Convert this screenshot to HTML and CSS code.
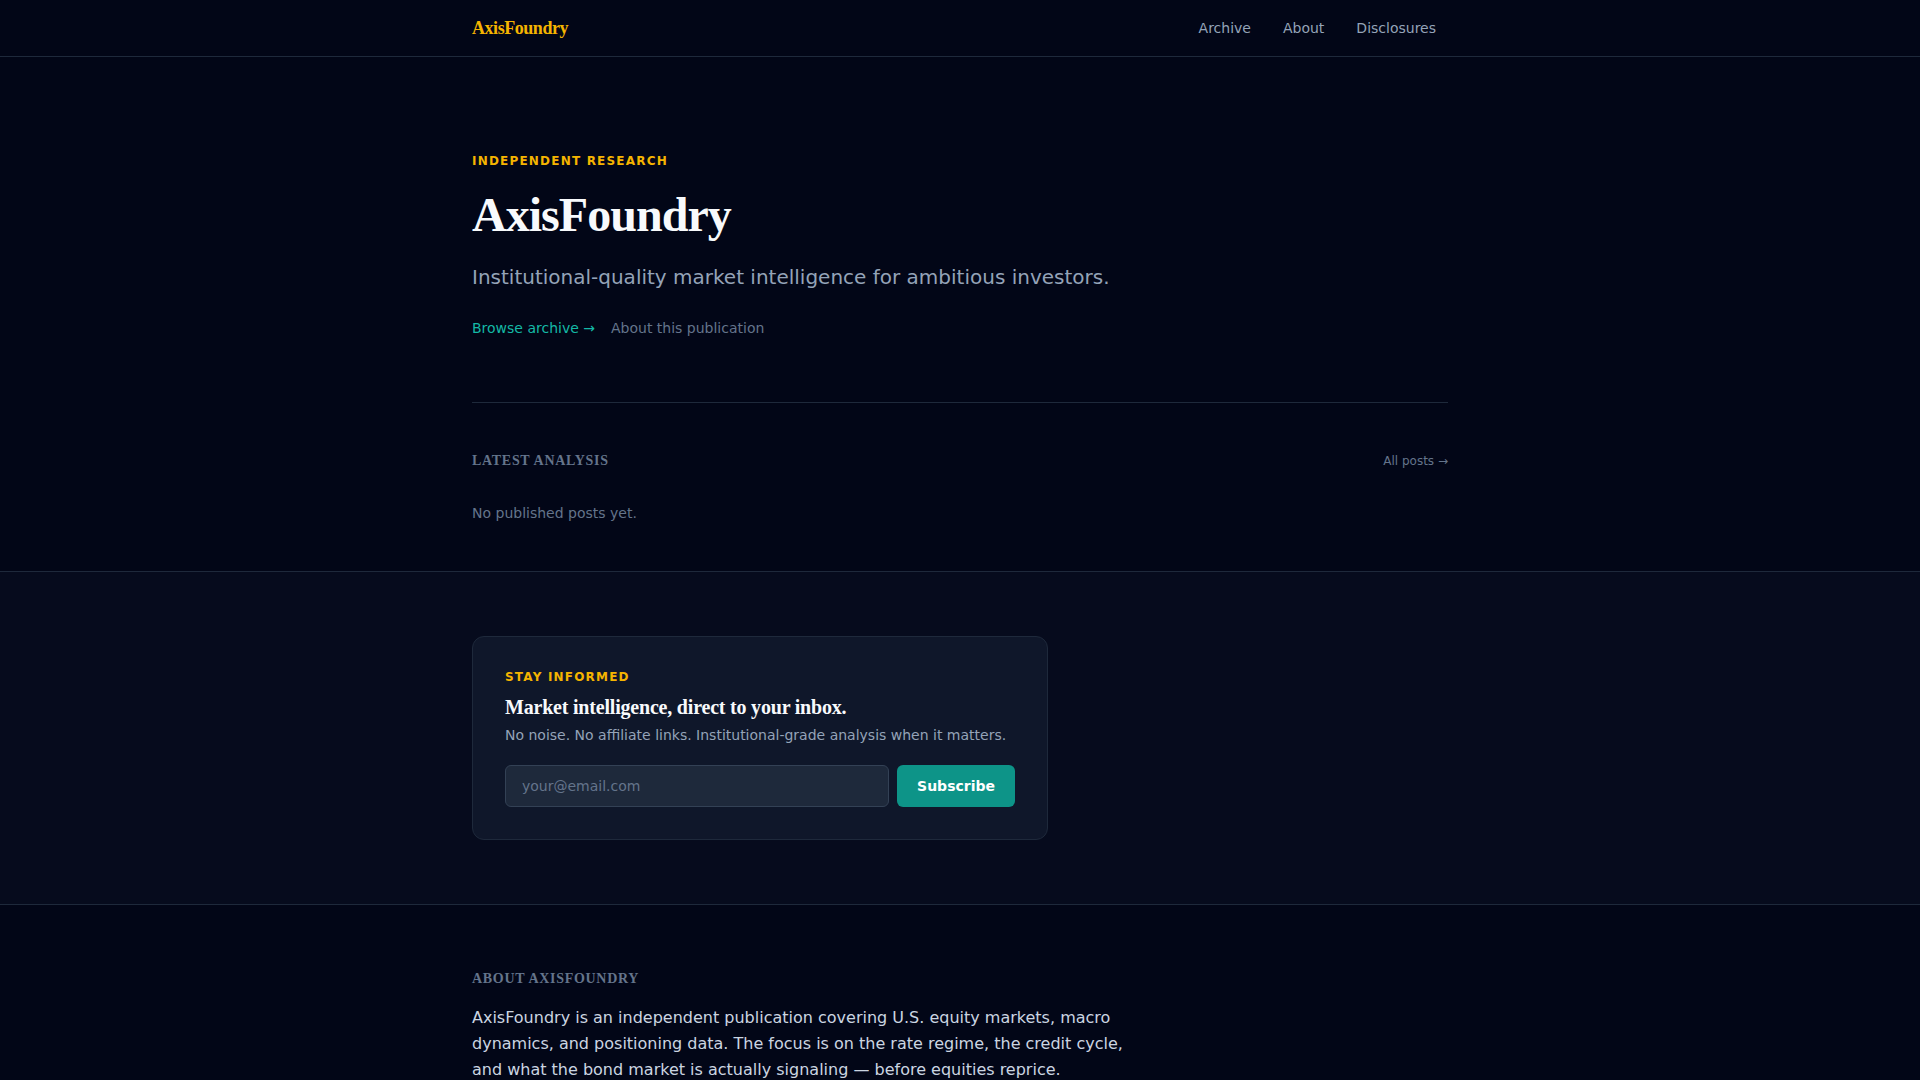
FILE: index.html
```html
<!DOCTYPE html>
<html lang="en">
<head>
  <meta charset="UTF-8" />
  <meta name="viewport" content="width=device-width, initial-scale=1.0"/>
  <title>AxisFoundry</title>
  <link rel="stylesheet" href="styles.css">
</head>
<body>
  <header class="site-header">
    <div class="container header-inner">
      <a class="logo" href="#">AxisFoundry</a>
      <nav class="nav">
        <a href="#">Archive</a>
        <a href="#">About</a>
        <a href="#">Disclosures</a>
      </nav>
    </div>
  </header>

  <main>
    <div class="container">
      <section class="hero">
        <p class="eyebrow">Independent Research</p>
        <h1 class="hero-title">AxisFoundry</h1>
        <p class="hero-sub">Institutional-quality market intelligence for ambitious investors.</p>
        <div class="hero-links">
          <a class="link-accent" href="#">Browse archive →</a>
          <a class="link-muted" href="#">About this publication</a>
        </div>
      </section>

      <section class="latest">
        <div class="section-head">
          <h2 class="section-label">Latest Analysis</h2>
          <a class="small-link" href="#">All posts →</a>
        </div>
        <p class="empty">No published posts yet.</p>
      </section>
    </div>

    <section class="newsletter">
      <div class="container">
        <div class="signup-card">
          <p class="eyebrow">Stay Informed</p>
          <h3 class="signup-title">Market intelligence, direct to your inbox.</h3>
          <p class="signup-text">No noise. No affiliate links. Institutional-grade analysis when it matters.</p>
          <form class="signup-form" onsubmit="return false;">
            <input class="signup-input" type="email" placeholder="your@email.com">
            <button class="signup-button" type="submit">Subscribe</button>
          </form>
        </div>
      </div>
    </section>

    <section class="about">
      <div class="container">
        <h2 class="section-label">About AxisFoundry</h2>
        <p class="about-text">AxisFoundry is an independent publication covering U.S. equity markets, macro dynamics, and positioning data. The focus is on the rate regime, the credit cycle, and what the bond market is actually signaling — before equities reprice.</p>
      </div>
    </section>
  </main>
</body>
</html>
```

FILE: styles.css
```css
* {
  margin: 0;
  padding: 0;
  box-sizing: border-box;
}

body {
  font-family: "DejaVu Sans", sans-serif;
  background-color: #020617;
  color: #e2e8f0;
  font-size: 14px;
  line-height: 20px;
}

a {
  text-decoration: none;
  color: inherit;
}

.container {
  max-width: 1024px;
  margin: 0 auto;
  padding: 0 24px;
}

/* header */
.site-header {
  border-bottom: 1px solid #1e293b;
}

.header-inner {
  height: 56px;
  display: flex;
  align-items: center;
  justify-content: space-between;
}

.logo {
  font-family: "Liberation Serif", serif;
  font-weight: 700;
  font-size: 18px;
  letter-spacing: -0.025em;
  color: #f5b400;
}

.nav {
  display: flex;
  gap: 8px;
}

.nav a {
  padding: 6px 12px;
  color: #94a3b8;
  font-size: 14px;
}

/* hero */
.hero {
  padding: 96px 0 64px;
  border-bottom: 1px solid #1e293b;
}

.eyebrow {
  font-size: 12px;
  line-height: 16px;
  font-weight: 700;
  letter-spacing: 0.1em;
  text-transform: uppercase;
  color: #f5b400;
}

.hero-title {
  margin-top: 16px;
  font-family: "Liberation Serif", serif;
  font-size: 48px;
  line-height: 60px;
  font-weight: 700;
  letter-spacing: -0.02em;
  color: #f8fafc;
}

.hero-sub {
  margin-top: 16px;
  font-size: 20px;
  line-height: 32px;
  color: #94a3b8;
}

.hero-links {
  margin-top: 25px;
  display: flex;
  gap: 16px;
}

.link-accent {
  color: #14b8a6;
}

.link-muted {
  color: #64748b;
}

/* latest */
.latest {
  padding: 48px 0;
}

.section-head {
  display: flex;
  align-items: center;
  justify-content: space-between;
  margin-bottom: 32px;
}

.section-label {
  font-family: "Liberation Serif", serif;
  font-size: 14px;
  line-height: 20px;
  font-weight: 700;
  letter-spacing: 0.05em;
  text-transform: uppercase;
  color: #64748b;
}

.small-link {
  font-size: 12px;
  color: #64748b;
}

.empty {
  color: #64748b;
}

/* newsletter */
.newsletter {
  background-color: #060b1d;
  border-top: 1px solid #1e293b;
  border-bottom: 1px solid #1e293b;
  padding: 64px 0;
}

.signup-card {
  max-width: 576px;
  padding: 32px;
  background-color: #0f172a;
  border: 1px solid #1e293b;
  border-radius: 12px;
}

.signup-title {
  margin-top: 8px;
  font-family: "Liberation Serif", serif;
  font-size: 20px;
  line-height: 28px;
  font-weight: 700;
  letter-spacing: -0.01em;
  color: #f8fafc;
}

.signup-text {
  margin-top: 4px;
  color: #94a3b8;
}

.signup-form {
  margin-top: 20px;
  display: flex;
  gap: 8px;
}

.signup-input {
  flex: 1;
  padding: 10px 16px;
  font-family: "DejaVu Sans", sans-serif;
  font-size: 14px;
  line-height: 20px;
  color: #e2e8f0;
  background-color: #1e293b;
  border: 1px solid #334155;
  border-radius: 6px;
  outline: none;
}

.signup-input::placeholder {
  color: #64748b;
}

.signup-button {
  padding: 0 20px;
  font-family: "DejaVu Sans", sans-serif;
  font-size: 14px;
  font-weight: 700;
  color: #ffffff;
  background-color: #0d9488;
  border: none;
  border-radius: 6px;
  cursor: pointer;
}

/* about */
.about {
  padding: 64px 0;
}

.about .section-label {
  margin-bottom: 16px;
}

.about-text {
  max-width: 672px;
  font-size: 16px;
  line-height: 26px;
  color: #cbd5e1;
}
```
